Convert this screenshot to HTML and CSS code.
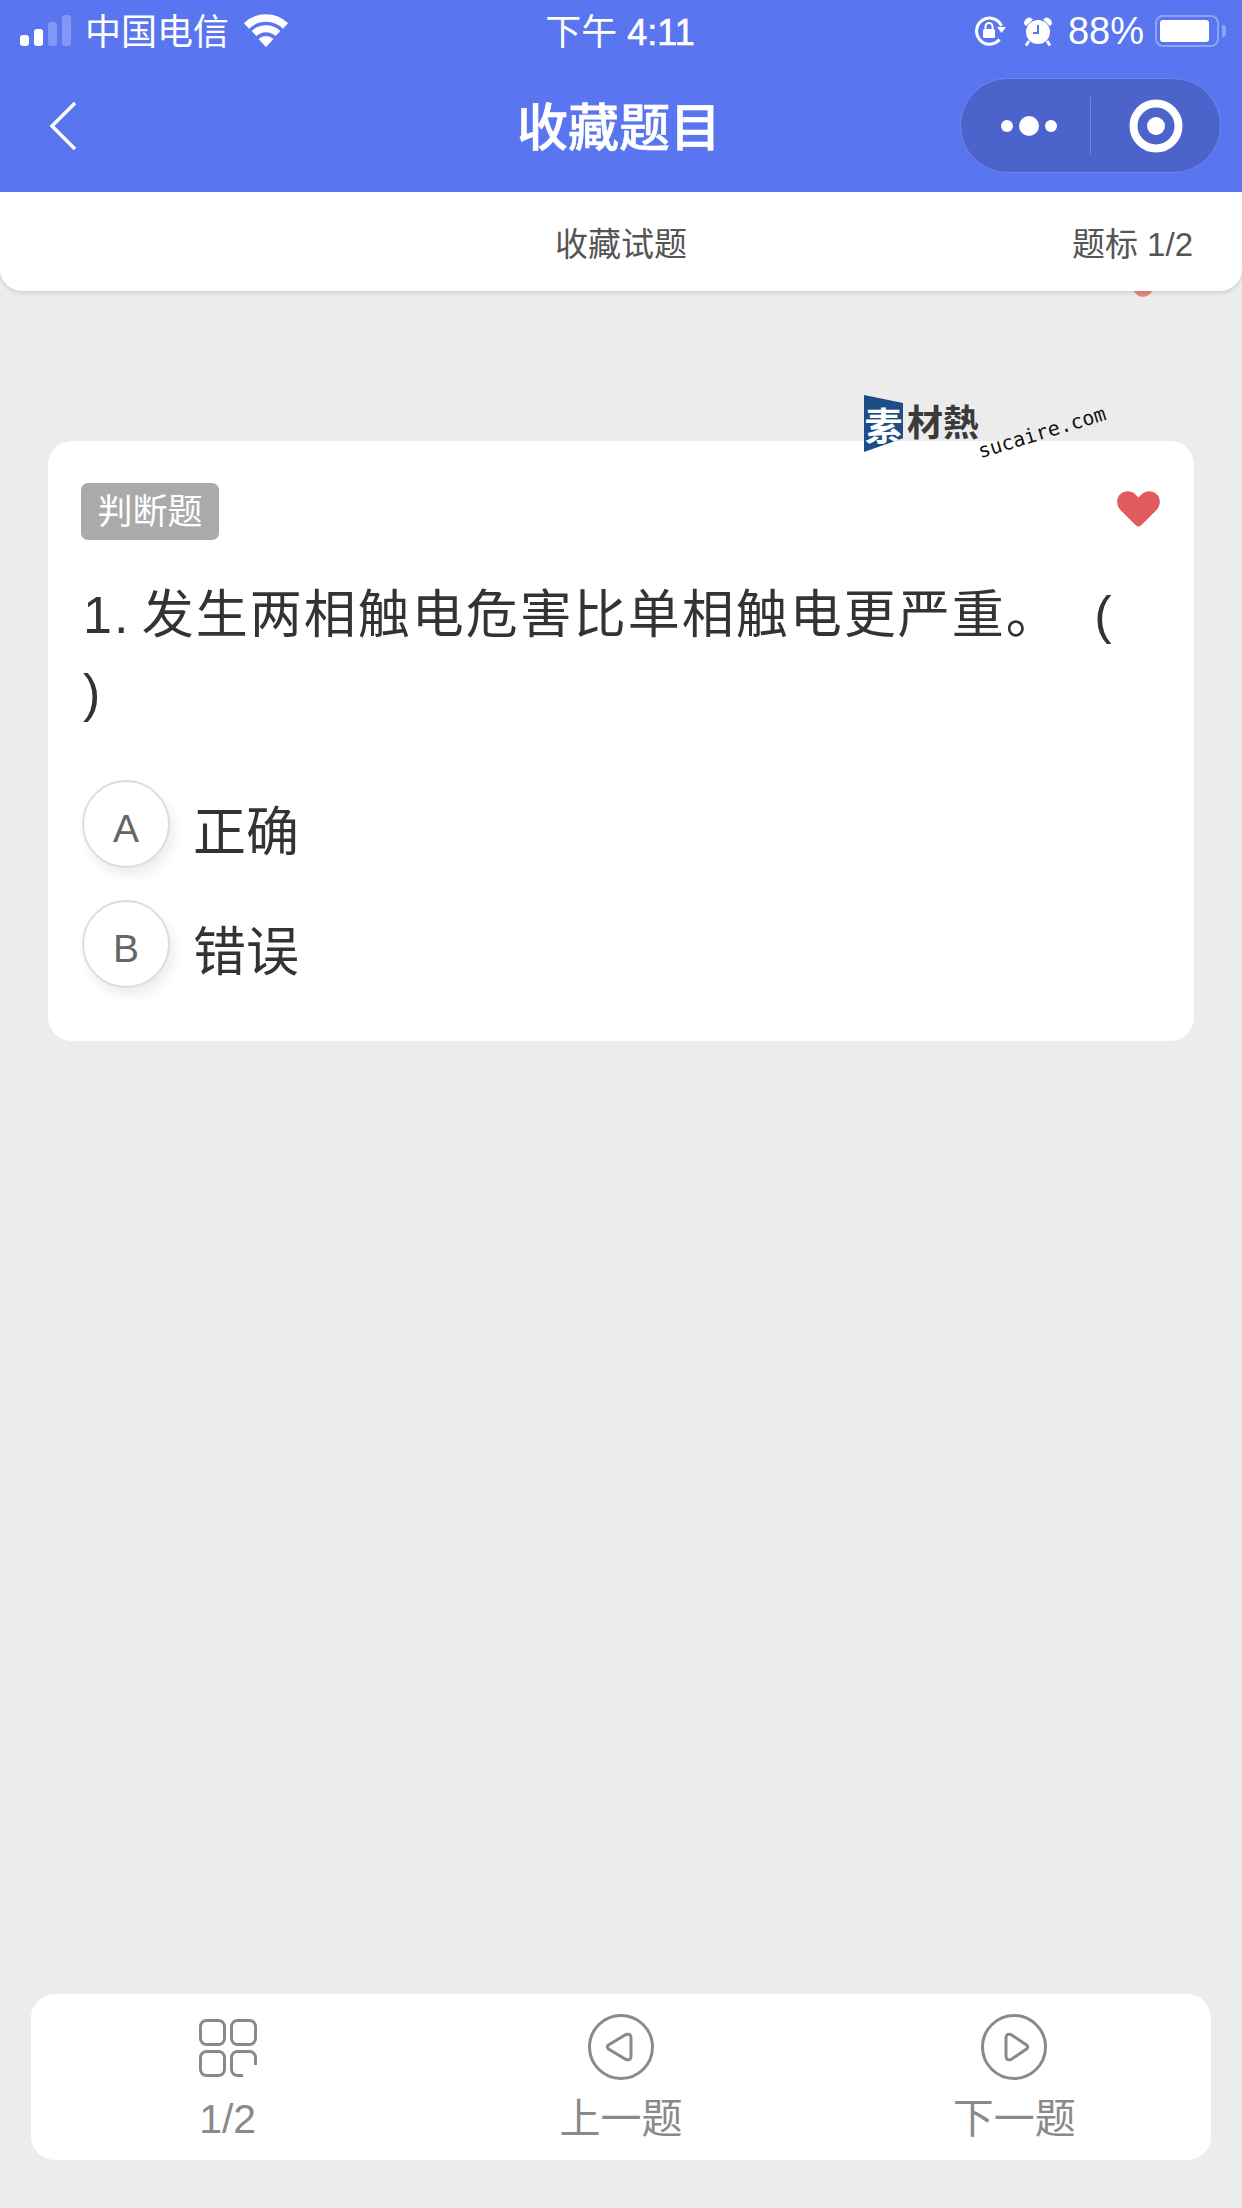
FILE: index.html

```html
<!DOCTYPE html>
<html lang="zh-CN">
<head>
  <meta charset="UTF-8">
  <meta name="viewport" content="width=device-width, initial-scale=1.0">
  <title>收藏题目</title>
  <link rel="stylesheet" href="styles.css">
</head>
<body>
  <header class="top">
    <div class="status">
      <div class="status-left">
        <div class="signal">
          <i class="bar bar-1"></i><i class="bar bar-2"></i><i class="bar bar-3 dim"></i><i class="bar bar-4 dim"></i>
        </div>
        <span class="carrier">中国电信</span>
        <svg class="wifi" viewBox="0 0 46 34" width="46" height="34">
          <path d="M3.500 13 A28 28 0 0 1 42.500 13" fill="none" stroke="#fff" stroke-width="7.500"/>
          <path d="M11 20.500 A17.500 17.500 0 0 1 35 20.500" fill="none" stroke="#fff" stroke-width="7"/>
          <path d="M15.500 26 A11 11 0 0 1 30.500 26 L23 34 Z" fill="#fff"/>
        </svg>
      </div>
      <span class="time">下午 <b>4:11</b></span>
      <div class="status-right">
        <svg class="lock" viewBox="0 0 32 30" width="32" height="30">
          <path d="M25.500 23.500 A13 13 0 1 1 27.500 10" fill="none" stroke="#fff" stroke-width="3"/>
          <path d="M23 11 H32 L27.500 17 Z" fill="#fff"/>
          <path d="M11.500 13 V10.500 A3.500 3.500 0 0 1 18.500 10.500 V13" fill="none" stroke="#fff" stroke-width="2"/>
          <rect x="9" y="13" width="12" height="9" rx="1.500" fill="#fff"/>
        </svg>
        <svg class="alarm" viewBox="0 0 30 30" width="30" height="30">
          <circle cx="15" cy="16" r="12" fill="#fff"/>
          <path d="M1 8 Q1 2 7 1.500 L10 3.500 L3 10 Z M29 8 Q29 2 23 1.500 L20 3.500 L27 10 Z" fill="#fff"/>
          <path d="M6 25 L3 29.500 M24 25 L27 29.500" stroke="#fff" stroke-width="3"/>
          <path d="M15 9 V17 H10" fill="none" stroke="#5a75f0" stroke-width="2"/>
        </svg>
        <span class="battery-text">88%</span>
        <div class="battery"><div class="battery-fill"></div></div>
        <i class="battery-nub"></i>
      </div>
    </div>
    <nav class="nav">
      <div class="nav-left">
        <svg class="back" viewBox="0 0 28 50" width="28" height="50">
          <path d="M26 2 L3 25 L26 48" fill="none" stroke="#fff" stroke-width="3.500"/>
        </svg>
      </div>
      <h1 class="nav-title">收藏题目</h1>
      <div class="nav-right">
        <div class="capsule">
          <div class="capsule-part">
            <svg class="capsule-dots" viewBox="0 0 58 24" width="58" height="24">
              <circle cx="7" cy="12" r="6" fill="#fff"/>
              <circle cx="29" cy="12" r="10" fill="#fff"/>
              <circle cx="51" cy="12" r="6" fill="#fff"/>
            </svg>
          </div>
          <i class="capsule-line"></i>
          <div class="capsule-part">
            <svg viewBox="0 0 54 54" width="54" height="54">
              <circle cx="27" cy="27" r="22.500" fill="none" stroke="#fff" stroke-width="8"/>
              <circle cx="27" cy="27" r="9" fill="#fff"/>
            </svg>
          </div>
        </div>
      </div>
    </nav>
  </header>

  <div class="subbar">
    <span></span>
    <span class="subbar-title">收藏试题</span>
    <span class="subbar-count">题标 1/2</span>
  </div>

  <main class="content">
    <i class="peek-dot"></i>
    <div class="watermark">
      <div class="wm-flag">素</div>
      <span class="wm-name">材熱</span>
      <span class="wm-url">sucaire.com</span>
    </div>

    <section class="card">
      <div class="card-head">
        <span class="tag">判断题</span>
        <svg class="heart" viewBox="0 0 43 36" width="43" height="36">
          <path d="M21.500 35.500 C20 35.500 19 34.500 17 32.500 L4 19.500 C-1 14.500 -1 7 3.500 3 C8 -1 15 -0.500 19 4 L21.500 6.500 L24 4 C28 -0.500 35 -1 39.500 3 C44 7 44 14.500 39 19.500 L26 32.500 C24 34.500 23 35.500 21.500 35.500 Z" fill="#e05a5e"/>
        </svg>
      </div>
      <p class="question">1. 发生两相触电危害比单相触电更严重。&nbsp;&nbsp; (<br>)</p>
      <div class="options">
        <div class="option">
          <span class="option-key">A</span>
          <span class="option-text">正确</span>
        </div>
        <div class="option">
          <span class="option-key">B</span>
          <span class="option-text">错误</span>
        </div>
      </div>
    </section>
  </main>

  <footer class="toolbar">
    <div class="tool">
      <svg class="tool-grid" viewBox="0 0 58 58" width="58" height="58">
        <rect x="1.500" y="1.500" width="24" height="24" rx="6" fill="none" stroke="#8a8a8a" stroke-width="3"/>
        <rect x="32.500" y="1.500" width="24" height="24" rx="6" fill="none" stroke="#8a8a8a" stroke-width="3"/>
        <rect x="1.500" y="32.500" width="24" height="24" rx="6" fill="none" stroke="#8a8a8a" stroke-width="3"/>
        <path d="M56.500 46 V38.500 A6 6 0 0 0 50.500 32.500 H38.500 A6 6 0 0 0 32.500 38.500 V50.500 A6 6 0 0 0 38.500 56.500 H44" fill="none" stroke="#8a8a8a" stroke-width="3"/>
      </svg>
      <span class="tool-label">1/2</span>
    </div>
    <div class="tool">
      <svg viewBox="0 0 66 66" width="66" height="66">
        <circle cx="33" cy="33" r="31.500" fill="none" stroke="#8a8a8a" stroke-width="3"/>
        <path d="M20.500 31 L38 20.500 Q43 19 43 24 V42 Q43 47 38 45.500 L20.500 35 Q18 33 20.500 31 Z" fill="none" stroke="#8a8a8a" stroke-width="3"/>
      </svg>
      <span class="tool-label">上一题</span>
    </div>
    <div class="tool">
      <svg viewBox="0 0 66 66" width="66" height="66">
        <circle cx="33" cy="33" r="31.500" fill="none" stroke="#8a8a8a" stroke-width="3"/>
        <path d="M45.500 31 L30 20.500 Q25 19 25 24 V42 Q25 47 30 45.500 L45.500 35 Q48 33 45.500 31 Z" fill="none" stroke="#8a8a8a" stroke-width="3"/>
      </svg>
      <span class="tool-label">下一题</span>
    </div>
  </footer>
</body>
</html>
```

FILE: styles.css

```css
* {
  box-sizing: border-box;
}
body {
  margin: 0;
  width: 1242px;
  height: 2208px;
  display: flex;
  flex-direction: column;
  position: relative;
  overflow: hidden;
  background-color: #ececec;
  color: #333;
  font-family: "Liberation Sans", "Noto Sans CJK SC", sans-serif;
}

/* blue header */
.top {
  height: 192px;
  background-color: #5a75f0;
  color: #fff;
  position: relative;
  z-index: 2;
}
.status {
  height: 62px;
  padding: 0 16px;
  display: grid;
  grid-template-columns: 1fr auto 1fr;
  align-items: center;
  font-size: 36px;
}
.status-left,
.status-right {
  display: flex;
  align-items: center;
}
.status-right {
  justify-content: flex-end;
}
.signal {
  display: flex;
  align-items: flex-end;
  gap: 5px;
  height: 31px;
  margin-left: 4px;
  margin-top: -2px;
}
.bar {
  width: 9px;
  border-radius: 3px;
  background-color: #fff;
}
.bar.dim {
  background-color: #8298f5;
}
.bar-1 { height: 11px; }
.bar-2 { height: 17px; }
.bar-3 { height: 24px; }
.bar-4 { height: 31px; }
.carrier {
  margin-left: 14px;
  margin-top: -5px;
}
.wifi {
  margin-left: 14px;
  margin-top: -2px;
}
.time {
  margin-top: -5px;
  margin-left: -2px;
}
.time b {
  font-weight: 400;
  -webkit-text-stroke: 0.6px #fff;
}
.lock {
  margin-right: 17px;
}
.alarm {
  margin-right: 15px;
}
.battery-text {
  font-size: 38px;
}
.battery {
  width: 64px;
  height: 32px;
  margin-left: 11px;
  padding: 3px;
  border: 2px solid #8ea2f6;
  border-radius: 8px;
}
.battery-fill {
  width: 49px;
  height: 22px;
  background-color: #fff;
  border-radius: 3px;
}
.battery-nub {
  width: 4px;
  height: 12px;
  margin-left: 3px;
  background-color: #8ea2f6;
  border-radius: 0 3px 3px 0;
}
.nav {
  height: 95px;
  margin-top: 16px;
  padding: 0 21px;
  display: grid;
  grid-template-columns: 1fr auto 1fr;
  align-items: center;
}
.back {
  display: block;
  margin-left: 28px;
}
.nav-title {
  margin: -3px 0 0 -4px;
  font-size: 51px;
  font-weight: 500;
  -webkit-text-stroke: 0.6px #fff;
}
.nav-right {
  display: flex;
  justify-content: flex-end;
}
.capsule {
  width: 261px;
  height: 95px;
  display: flex;
  align-items: center;
  background-color: #4c63cb;
  border: 1px solid #6f87ea;
  border-radius: 48px;
}
.capsule-part {
  flex: 1;
  display: flex;
  align-items: center;
  justify-content: center;
}
.capsule-part svg {
  display: block;
}
.capsule-dots {
  margin-left: 6px;
}
.capsule-line {
  width: 1px;
  height: 57px;
  background-color: #6f87ea;
}

/* white strip under the header */
.subbar {
  height: 99px;
  padding: 0 49px;
  display: grid;
  grid-template-columns: 1fr auto 1fr;
  align-items: center;
  position: relative;
  z-index: 1;
  background-color: #fff;
  border-radius: 0 0 22px 22px;
  box-shadow: 0 2px 4px rgba(0, 0, 0, 0.12);
  color: #555;
  font-size: 33px;
}
.subbar-count {
  text-align: right;
}

/* question card */
.content {
  padding: 150px 48px 0;
  position: relative;
}
.peek-dot {
  position: absolute;
  left: 1133px;
  top: -14px;
  width: 20px;
  height: 20px;
  border-radius: 50%;
  background-color: #e58a80;
}
.card {
  height: 600px;
  padding: 42px 34px 0 33px;
  background-color: #fff;
  border-radius: 24px;
}
.card-head {
  display: flex;
  justify-content: space-between;
  align-items: flex-start;
}
.tag {
  width: 138px;
  height: 57px;
  line-height: 57px;
  text-align: center;
  background-color: #aaa;
  border-radius: 7px;
  color: #fff;
  font-size: 35px;
}
.heart {
  margin-top: 8px;
}
.question {
  margin: 36px 0 0;
  padding-left: 2px;
  font-size: 52px;
  line-height: 78px;
  letter-spacing: 2px;
  word-spacing: -5px;
}
.options {
  margin-top: 48px;
  display: flex;
  flex-direction: column;
  gap: 32px;
}
.option {
  display: flex;
  align-items: center;
  padding-left: 1px;
}
.option-key {
  width: 88px;
  height: 88px;
  padding-top: 9px;
  display: flex;
  align-items: center;
  justify-content: center;
  background-color: #fff;
  border: 2px solid #ddd;
  border-radius: 50%;
  box-shadow: 4px 7px 12px rgba(0, 0, 0, 0.08);
  color: #666;
  font-size: 39px;
}
.option-text {
  margin-left: 23px;
  margin-top: 8px;
  font-size: 53px;
}

/* bottom toolbar */
.toolbar {
  margin: auto 31px 48px;
  height: 166px;
  display: grid;
  grid-template-columns: repeat(3, 1fr);
  background-color: #fff;
  border-radius: 24px;
  color: #8a8a8a;
}
.tool {
  height: 100%;
  padding-top: 20px;
  display: flex;
  flex-direction: column;
  align-items: center;
}
.tool svg {
  display: block;
  flex: none;
}
.tool .tool-grid {
  margin: 5px 0 3px;
}
.tool-label {
  margin-top: 16px;
  font-size: 41px;
  line-height: 46px;
}

/* site watermark pasted over the shot */
.watermark {
  position: absolute;
  left: 864px;
  top: 104px;
  width: 260px;
  height: 70px;
}
.wm-flag {
  width: 39px;
  height: 57px;
  display: flex;
  align-items: center;
  justify-content: center;
  background-color: #1d4c86;
  clip-path: polygon(0 0, 100% 14%, 100% 76%, 0 100%);
  color: #fff;
  font-size: 38px;
  font-weight: 700;
}
.wm-name {
  position: absolute;
  left: 43px;
  top: 7px;
  color: #3a3a3a;
  font-size: 36px;
  font-weight: 700;
  line-height: 44px;
}
.wm-url {
  position: absolute;
  left: 118px;
  top: 44px;
  color: #111;
  font-family: "DejaVu Sans Mono", monospace;
  font-size: 20px;
  line-height: 24px;
  transform: rotate(-17deg);
  transform-origin: left bottom;
}
```
